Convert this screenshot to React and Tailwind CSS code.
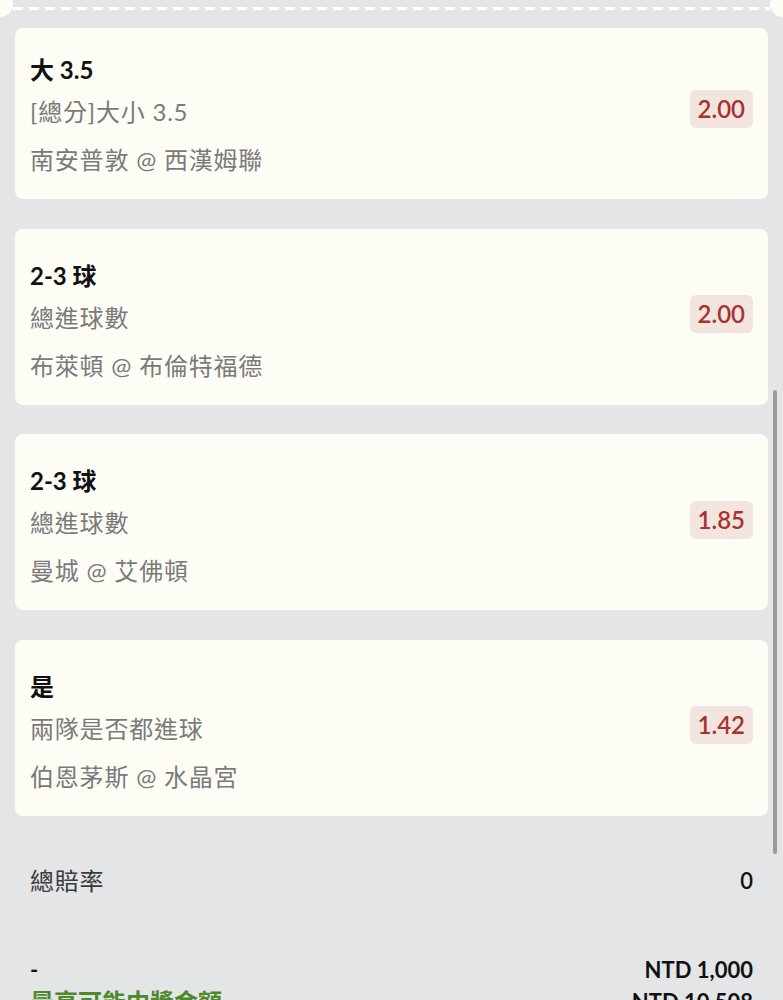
const bets = [
  { pick: '大 3.5', market: '[總分]大小 3.5', match: '南安普敦 @ 西漢姆聯', odds: '2.00' },
  { pick: '2-3 球', market: '總進球數', match: '布萊頓 @ 布倫特福德', odds: '2.00' },
  { pick: '2-3 球', market: '總進球數', match: '曼城 @ 艾佛頓', odds: '1.85' },
  { pick: '是', market: '兩隊是否都進球', match: '伯恩茅斯 @ 水晶宮', odds: '1.42' },
];

function BetCard({ bet, first }) {
  return (
    <div
      className={`flex items-center justify-between rounded-[8px] bg-[#fdfdf6] pl-[15px] pr-[15px] pb-[23px] ${
        first ? 'pt-[28px]' : 'pt-[33px]'
      }`}
    >
      <div className="flex flex-col">
        <p className="text-[24px] leading-[28px] font-bold text-[#111]">{bet.pick}</p>
        <p className="mt-3 text-[24px] leading-[32px] tracking-[0.8px] text-[#7a7a7a]">{bet.market}</p>
        <p className="mt-4 text-[24px] leading-[32px] tracking-[0.8px] text-[#7a7a7a]">{bet.match}</p>
      </div>
      {/* odds badge */}
      <span className="-mt-[15px] rounded-[6px] bg-[#f2e5df] px-[8px] py-[3px] text-[24px] leading-[32px] font-semibold text-[#a8322d]">
        {bet.odds}
      </span>
    </div>
  );
}

export default function App() {
  return (
    <div className="relative h-[1000px] w-[783px] overflow-hidden bg-[#e4e5e7] font-['Lato','Noto_Sans_CJK_TC',sans-serif]">
      {/* ticket edge with notches */}
      <div className="relative h-[28px]">
        <div className="absolute -left-[13px] -top-[9px] h-[26px] w-[26px] rounded-full bg-[#fdfdf6]" />
        <div className="absolute -right-[13px] -top-[9px] h-[26px] w-[26px] rounded-full bg-[#fdfdf6]" />
        <div className="absolute left-[13px] right-[13px] top-[7px] h-[3px] bg-[repeating-linear-gradient(90deg,#ffffff_0_10px,transparent_10px_16px)]" />
      </div>

      <div className="flex flex-col gap-[29.5px] px-[15px]">
        {bets.map((bet, i) => (
          <BetCard key={i} bet={bet} first={i === 0} />
        ))}
      </div>

      {/* totals */}
      <div className="px-[30px]">
        <div className="mt-[49px] flex items-center justify-between">
          <span className="text-[24px] leading-[32px] tracking-[0.8px] text-[#3a3a3a]">總賠率</span>
          <span className="text-[22px] leading-[32px] font-semibold text-[#111]">0</span>
        </div>
        <div className="mt-[57px] flex items-center justify-between">
          <span className="text-[22px] leading-[32px] font-bold text-[#111]">-</span>
          <span className="text-[22px] leading-[32px] font-bold text-[#111]">NTD 1,000</span>
        </div>
        <div className="flex items-center justify-between">
          <span className="text-[24px] leading-[32px] font-bold text-[#4c8a2c]">最高可能中獎金額</span>
          <span className="text-[22px] leading-[32px] font-bold text-[#111]">NTD 10,508</span>
        </div>
      </div>

      {/* scrollbar thumb */}
      <div className="absolute left-[773px] top-[390px] h-[464px] w-[4px] rounded-full bg-[#9b9b9b]" />
    </div>
  );
}
